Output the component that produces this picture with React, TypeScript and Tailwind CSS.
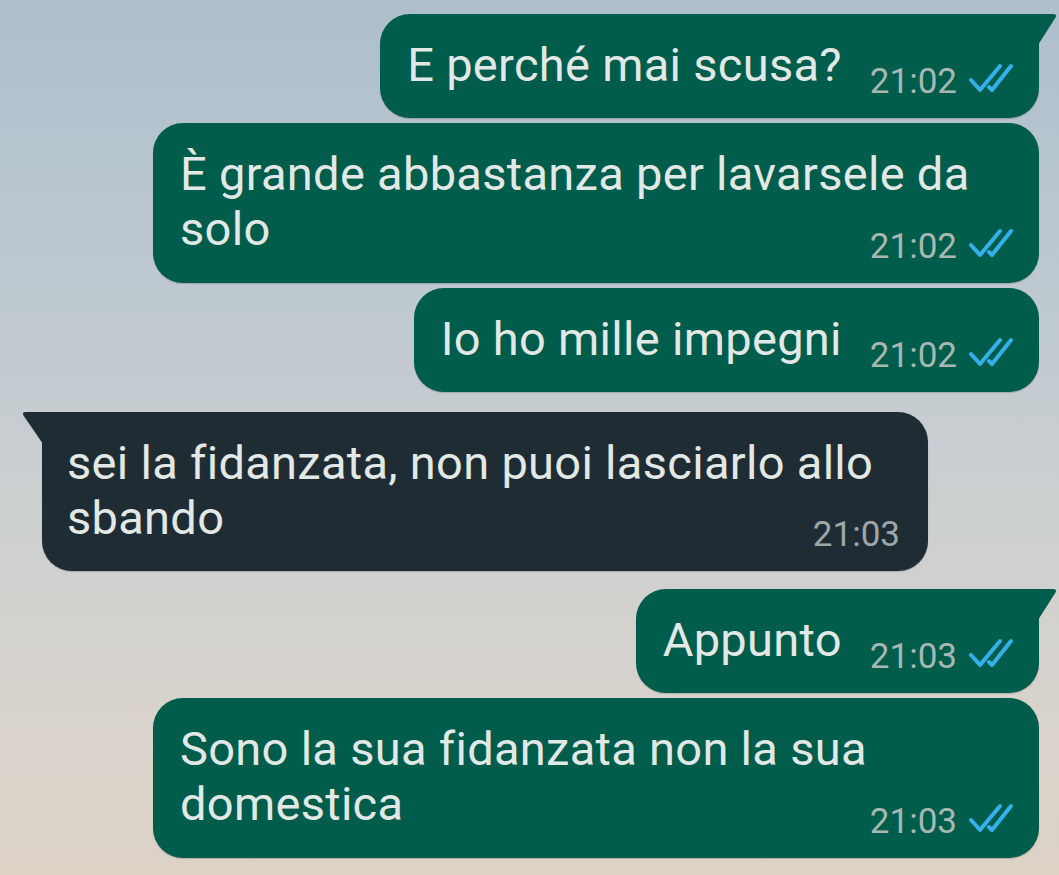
import React from "react";

type Msg = {
  text: string;
  time: string;
  out: boolean;
  tail?: boolean;
  multi?: boolean;
  gap: string;
};

const messages: Msg[] = [
  { text: "E perché mai scusa?", time: "21:02", out: true, tail: true, gap: "mt-0" },
  { text: "È grande abbastanza per lavarsele da solo", time: "21:02", out: true, multi: true, gap: "mt-[5px]" },
  { text: "Io ho mille impegni", time: "21:02", out: true, gap: "mt-[5px]" },
  { text: "sei la fidanzata, non puoi lasciarlo allo sbando", time: "21:03", out: false, tail: true, multi: true, gap: "mt-[20px]" },
  { text: "Appunto", time: "21:03", out: true, tail: true, gap: "mt-[18px]" },
  { text: "Sono la sua fidanzata non la sua domestica", time: "21:03", out: true, multi: true, gap: "mt-[5px]" },
];

function Ticks() {
  return (
    <svg width="44" height="30" viewBox="0 0 44 30" fill="none" className="mb-[6px] shrink-0">
      <path d="M2 17 L11 27 L31 3" stroke="#34b0ea" strokeWidth="4" strokeLinecap="round" strokeLinejoin="round" />
      <path d="M20 24 L23 27 L42 3" stroke="#34b0ea" strokeWidth="4" strokeLinecap="round" strokeLinejoin="round" />
    </svg>
  );
}

function Meta({ time, out, multi }: { time: string; out: boolean; multi?: boolean }) {
  return (
    <div
      className={`flex items-end gap-[12px] shrink-0 ${
        multi ? "self-end mt-[-28px] mb-[-7px]" : "mb-[-7px]"
      }`}
    >
      <span className={`text-[35px] leading-[35px] ${out ? "text-[#a7b8b3]" : "text-[#9fa6aa]"}`}>{time}</span>
      {out && <Ticks />}
    </div>
  );
}

function Bubble({ m }: { m: Msg }) {
  return (
    <div className={`flex ${m.out ? "justify-end pr-[20px]" : "justify-start pl-[42px]"} ${m.gap}`}>
      <div
        className={`
          relative max-w-[886px] rounded-[30px] pt-[23px] pb-[26px]
          shadow-[0_1px_1px_rgba(0,0,0,0.18)]
          ${m.out ? "bg-[#005c4b] pl-[27px] pr-[26px]" : "bg-[#202c33] pl-[25px] pr-[28px]"}
          ${m.tail && m.out ? "rounded-tr-none" : ""}
          ${m.tail && !m.out ? "rounded-tl-none" : ""}
          ${m.multi ? "flex flex-col" : "flex items-end gap-[28px]"}
        `}
      >
        {/* tail */}
        {m.tail && m.out && (
          <svg width="20" height="32" viewBox="0 0 20 32" className="absolute top-0 right-[-19px]">
            <path d="M0 0 L15 0 Q19.5 0 17.5 3.5 L0 31 Z" fill="#005c4b" />
          </svg>
        )}
        {m.tail && !m.out && (
          <svg width="22" height="33" viewBox="0 0 22 33" className="absolute top-0 left-[-21px]">
            <path d="M22 0 L5 0 Q0.5 0 2.5 3.5 L22 32 Z" fill="#202c33" />
          </svg>
        )}

        <p className="text-[47px] leading-[55px] tracking-[0.3px] text-[#e2e8e6]">{m.text}</p>
        <Meta time={m.time} out={m.out} multi={m.multi} />
      </div>
    </div>
  );
}

export default function App() {
  return (
    <div
      className="w-[1059px] h-[875px] overflow-hidden pt-[14px] bg-[linear-gradient(180deg,#adbfcb_0%,#bfc9d0_35%,#cdd0d0_60%,#d9d3cb_85%,#dcd2c6_100%)]"
      style={{ fontFamily: "Roboto, 'Noto Sans', sans-serif" }}
    >
      {messages.map((m, i) => (
        <Bubble key={i} m={m} />
      ))}
    </div>
  );
}
